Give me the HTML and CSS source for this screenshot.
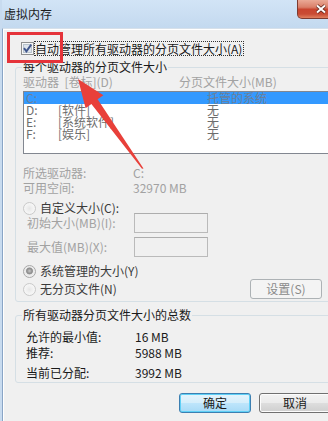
FILE: index.html
```html
<!DOCTYPE html>
<html lang="zh-CN">
<head>
<meta charset="utf-8">
<title>虚拟内存</title>
<link rel="stylesheet" href="styles.css">
</head>
<body>
<div class="window">
  <div class="titlebar">
    <span class="title">虚拟内存</span>
    <div class="close">
      <svg width="12" height="10" viewBox="0 0 12 10"><path class="xo" d="M2 1.5 L10 8.5 M10 1.5 L2 8.5"/><path class="xi" d="M2 1.5 L10 8.5 M10 1.5 L2 8.5"/></svg>
    </div>
  </div>
  <div class="client">
    <div class="auto">
      <svg class="checkbox" width="13" height="13" viewBox="0 0 13 13">
        <rect x="0.5" y="0.5" width="12" height="12" fill="#f6f6f6" stroke="#8e8f8f"/>
        <rect x="2.5" y="2.5" width="8" height="8" fill="#dde4ec" stroke="#b9c3cd"/>
        <path d="M3 6.2 L5.4 9.3 L10.2 2.6" fill="none" stroke="#40568c" stroke-width="1.9"/>
      </svg>
      <span class="focus">自动管理所有驱动器的分页文件大小(A)</span>
    </div>

    <fieldset class="group g1">
      <legend>每个驱动器的分页文件大小</legend>
      <div class="cols dim"><span>驱动器&nbsp;&nbsp;[卷标](D)</span><span>分页文件大小(MB)</span></div>
      <div class="list">
        <div class="row sel"><span>C:</span><span></span><span>托管的系统</span></div>
        <div class="row"><span>D:</span><span>[软件]</span><span>无</span></div>
        <div class="row"><span>E:</span><span>[系统软件]</span><span>无</span></div>
        <div class="row"><span>F:</span><span>[娱乐]</span><span>无</span></div>
      </div>
      <div class="info dim i1"><span>所选驱动器:</span><span>C:</span></div>
      <div class="info dim i2"><span>可用空间:</span><span>32970 MB</span></div>
      <div class="radio r1"><span class="rb"></span><span>自定义大小(C):</span></div>
      <div class="field dim f1"><span>初始大小(MB)(I):</span><span class="input"></span></div>
      <div class="field dim f2"><span>最大值(MB)(X):</span><span class="input"></span></div>
      <div class="radio r2"><span class="rb on"></span><span>系统管理的大小(Y)</span></div>
      <div class="last-row">
        <div class="radio"><span class="rb"></span><span>无分页文件(N)</span></div>
        <span class="btn dis">设置(S)</span>
      </div>
    </fieldset>

    <fieldset class="group g2">
      <legend>所有驱动器分页文件大小的总数</legend>
      <div class="sum s1"><span>允许的最小值:</span><span>16 MB</span></div>
      <div class="sum s2"><span>推荐:</span><span>5988 MB</span></div>
      <div class="sum s3"><span>当前已分配:</span><span>3992 MB</span></div>
    </fieldset>

    <div class="actions">
      <span class="btn def">确定</span>
      <span class="btn">取消</span>
    </div>
  </div>
</div>

<div class="mark-box"></div>
<svg class="mark-arrow" width="328" height="421" viewBox="0 0 328 421">
  <polygon points="78,79 103.4,95.2 97.6,99.3 143.5,168.5 142,168.8 91.4,104 85.6,108.2"/>
</svg>
</body>
</html>
```

FILE: styles.css
```css
html, body {
  margin: 0;
  padding: 0;
  overflow: hidden;
  background: #f0f0f0;
}

body {
  font-family: "Noto Sans CJK SC", "Noto Sans", sans-serif;
  font-size: 12px;
  line-height: 12px;
  color: #1a1a1a;
}

.window {
  width: 345px;
  height: 421px;
  border-left: 2px solid #c8dbef;
  display: flex;
  flex-direction: column;
  background: #f0f0f0;
}

.titlebar {
  height: 28px;
  flex: none;
  display: flex;
  align-items: flex-start;
  background: linear-gradient(#d2e4f6, #c3d9ef);
}

.title {
  margin: 8px 0 0 2px;
  color: #1b1b1b;
  line-height: 12px;
}

.close {
  margin-left: auto;
  margin-right: 2px;
  width: 48px;
  height: 19px;
  box-sizing: border-box;
  border: 1px solid #7d3b30;
  border-top: none;
  border-radius: 0 0 5px 5px;
  background: linear-gradient(#eaa996 0%, #da7f69 40%, #c9452f 52%, #c94c34 78%, #e0805f 100%);
  display: flex;
  align-items: center;
  justify-content: center;
}

.close .xo {
  fill: none;
  stroke: #5b231a;
  stroke-width: 3.6;
}

.close .xi {
  fill: none;
  stroke: #ffffff;
  stroke-width: 2;
}

.client {
  flex: 1;
  border-left: 1px solid #8aa5c6;
  border-top: 1px solid #d6e0ea;
  box-shadow: inset 1px 1px 0 #ffffff;
}

/* auto manage checkbox */
.auto {
  margin: 12px 0 0 18px;
  height: 15px;
  display: flex;
  align-items: center;
}

.checkbox {
  flex: none;
  display: block;
}

.focus {
  height: 15px;
  box-sizing: border-box;
  border: 1px dotted #333;
  padding: 0 1px 0 0;
  line-height: 13px;
  white-space: nowrap;
}

/* group boxes */
.group {
  margin: 0 0 0 12px;
  width: 322px;
  box-sizing: border-box;
  min-width: 0;
  border: 1px solid #d5dfe5;
  border-radius: 3px;
  padding: 0 0 2px 7px;
}

.group legend {
  padding: 0 1px;
  margin-left: -1px;
  line-height: 12px;
  color: #1a1a1a;
}

.g1 { margin-top: 5px; }
.g2 { margin-top: 7px; padding-bottom: 3px; }

.dim { color: #a2a2a2; }

.cols {
  margin-top: 3px;
  height: 12px;
  display: grid;
  grid-template-columns: 156px 1fr;
  white-space: nowrap;
}

.list {
  margin-top: 3px;
  width: 307px;
  height: 63px;
  box-sizing: border-box;
  border: 1px solid #828790;
  background: #ffffff;
  color: #6d6d6d;
}

.row {
  height: 12px;
  padding-left: 2px;
  display: grid;
  grid-template-columns: 32px 149px 1fr;
  white-space: nowrap;
}

.row.sel {
  background: #3399ff;
  color: #6c7f98;
}

.info {
  height: 12px;
  display: grid;
  grid-template-columns: 110px 1fr;
}

.i1 { margin-top: 13px; }
.i2 { margin-top: 3px; }

.radio {
  height: 12px;
  display: flex;
  align-items: center;
  gap: 4px;
  color: #3a3a3a;
  white-space: nowrap;
}

.r1 { margin-top: 8px; }
.r2 { margin-top: 8px; }

.rb {
  flex: none;
  width: 13px;
  height: 13px;
  box-sizing: border-box;
  border-radius: 50%;
  border: 1px solid #c9c9c9;
  background: radial-gradient(circle at 50% 50%, #e6e6e6 0, #f2f2f2 45%, #fbfbfb 100%);
}

.rb.on {
  border-color: #a9a9a9;
  background: radial-gradient(circle at 50% 45%, #c6c6c6 0, #8e8e8e 2.6px, #9b9b9b 3.2px, #e9e9e9 3.8px, #f7f7f7 100%);
}

.field {
  height: 20px;
  padding-left: 4px;
  display: grid;
  grid-template-columns: 107px 74px;
  align-items: center;
  white-space: nowrap;
}

.f1 { margin-top: -1px; }
.f2 { margin-top: 4px; }

.input {
  height: 20px;
  box-sizing: border-box;
  border: 1px solid #bababa;
  border-top-color: #adadad;
}

.last-row {
  margin-top: 2px;
  height: 20px;
  display: grid;
  grid-template-columns: 227px 72px;
  align-items: center;
}

.btn {
  height: 20px;
  box-sizing: border-box;
  display: flex;
  align-items: center;
  justify-content: center;
  border: 1px solid #707070;
  border-radius: 3px;
  background: linear-gradient(#f3f3f3 0%, #ebebeb 48%, #dddddd 52%, #cfcfcf 100%);
  box-shadow: inset 0 0 0 1px #fcfcfc;
  color: #1a1a1a;
  white-space: nowrap;
}

.btn.dis {
  border-color: #adb2b5;
  background: #f4f4f4;
  box-shadow: none;
  color: #8a8a8a;
}

.btn.def {
  border-color: #3c7fb1;
  background: linear-gradient(#e5f4fc 0%, #d5eefb 48%, #bde5fb 52%, #a8daf6 100%);
  box-shadow: inset 0 0 0 1px #5fd0f6;
}

/* totals */
.sum {
  height: 12px;
  padding-left: 3px;
  display: grid;
  grid-template-columns: 109px 1fr;
  white-space: nowrap;
}

.s1 { margin-top: 10px; }
.s2 { margin-top: 4px; }
.s3 { margin-top: 8px; }

.actions {
  margin-top: 10px;
  padding-left: 176px;
  display: flex;
  gap: 8px;
}

.actions .btn {
  width: 72px;
  flex: none;
}

/* annotations drawn over the screenshot */
.mark-box {
  position: absolute;
  left: 7px;
  top: 32px;
  width: 56px;
  height: 31px;
  box-sizing: border-box;
  border: 3px solid #e5333a;
}

.mark-arrow {
  position: absolute;
  left: 0;
  top: 0;
  pointer-events: none;
}

.mark-arrow polygon {
  fill: #e8403a;
}
```
